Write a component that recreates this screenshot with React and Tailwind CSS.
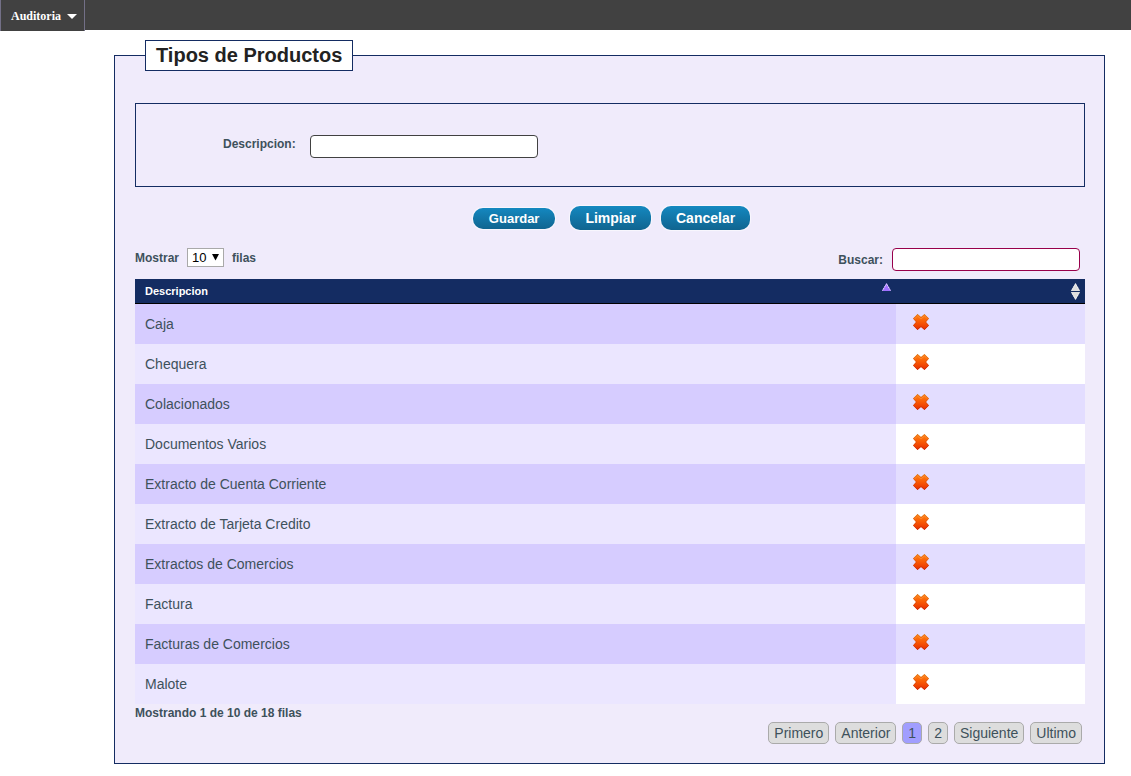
import React, { useState } from "react";

const products = [
  "Caja",
  "Chequera",
  "Colacionados",
  "Documentos Varios",
  "Extracto de Cuenta Corriente",
  "Extracto de Tarjeta Credito",
  "Extractos de Comercios",
  "Factura",
  "Facturas de Comercios",
  "Malote",
];

function DeleteIcon() {
  return (
    <svg width="16" height="16" viewBox="0 0 16 16" className="block" aria-hidden="true">
      <defs>
        <linearGradient id="cross" x1="0" y1="0" x2="0" y2="1">
          <stop offset="0" stopColor="#ff8412" />
          <stop offset="0.5" stopColor="#f95a05" />
          <stop offset="1" stopColor="#e42c00" />
        </linearGradient>
        <linearGradient id="crossEdge" x1="0" y1="0" x2="0" y2="1">
          <stop offset="0" stopColor="#c9762c" />
          <stop offset="0.5" stopColor="#d04a0c" />
          <stop offset="1" stopColor="#b81500" />
        </linearGradient>
      </defs>
      <path
        d="M4.500 0 8 3 11.500 0 16 4.500 13 8 16 11.500 11.500 16 8 13 4.500 16 0 11.500 3 8 0 4.500Z"
        fill="url(#cross)"
      />
      <path
        d="M4.500 .5 8 3.500 11.500 .5 15.500 4.500 12.500 8 15.500 11.500 11.500 15.500 8 12.500 4.500 15.500 .5 11.500 3.500 8 .5 4.500Z"
        fill="none"
        stroke="url(#crossEdge)"
        strokeWidth="1"
        strokeDasharray=".8 .6"
      />
      <path d="M2 4.500 4.500 2 8 5 11.500 2 14 4.500" fill="none" stroke="#ffa95a" strokeWidth=".7" strokeDasharray=".8 .6" />
    </svg>
  );
}

function SortAscIcon() {
  return (
    <svg width="9" height="8" viewBox="0 0 9 8" className="block" aria-hidden="true">
      <path d="M4.500 0 9 8H0Z" fill="#a070ff" />
      <path d="M.5 7.500 4.500 .8 8.500 7.500" fill="none" stroke="#f3edff" strokeWidth="1" strokeDasharray="1.300 .6" />
    </svg>
  );
}

function SortBothIcon() {
  return (
    <svg width="9" height="17" viewBox="0 0 9 17" className="block" aria-hidden="true">
      <path d="M4.500 0 9 8H0Z" fill="#dedede" />
      <path d="M0 9H9L4.500 17Z" fill="#dedede" />
      <path d="M.5 7.500 4.500 .8 8.500 7.500M.5 9.500 4.500 16.200 8.500 9.500" fill="none" stroke="#fff" strokeWidth=".8" strokeDasharray="1.300 .6" />
    </svg>
  );
}

const actionButton =
  "rounded-[10px] bg-linear-to-b from-[#1488c0] to-[#106590] font-bold text-white shadow-[0_0_1px_1px_#ffffff99]";

const pages = ["Primero", "Anterior", "1", "2", "Siguiente", "Ultimo"];

export default function App() {
  const [page, setPage] = useState("1");

  return (
    <div className="bg-white pb-3 font-['Liberation_Sans',Arial,sans-serif] text-[#3e515b]">
      <nav className="flex h-[30px] items-start bg-[#414141]">
        <button
          type="button"
          className="flex h-[31px] items-center gap-[6px] border-x border-[#737087] bg-[#414141] pr-[7px] pl-[10px] font-['Liberation_Serif',serif] text-[12px] font-bold text-white"
        >
          Auditoria
          <svg width="10" height="5" viewBox="0 0 10 5" aria-hidden="true" className="mt-[2px]">
            <path d="M0 0H10L5 5Z" fill="#fff" />
          </svg>
        </button>
      </nav>

      <main className="pt-[10px] pr-[26px] pl-[114px]">
        <fieldset className="min-w-0 border border-[#142c62] bg-[#f0ebfb] pr-[19px] pb-[19px] pl-[20px]">
          <legend className="ml-[10px] border border-[#142c62] bg-white px-[10px] text-[20px] leading-[29px] font-bold text-[#222222]">
            Tipos de Productos
          </legend>

          <div className="mt-8 flex items-start gap-[14px] border border-[#142c62] pt-[31px] pb-[28px] pl-[87px]">
            <label htmlFor="descripcion" className="text-[12px] leading-[18px] font-bold">
              Descripcion:
            </label>
            <input
              id="descripcion"
              type="text"
              className="h-[23px] w-[228px] rounded-[4px] border border-[#414141] bg-white px-1 text-[13px] text-black"
            />
          </div>

          <div className="mt-[19px] flex items-center justify-center pl-[3px]">
            <button type="button" className={`${actionButton} mr-[15px] h-[21px] px-4 text-[13px] leading-[21px]`}>
              Guardar
            </button>
            <button type="button" className={`${actionButton} mr-[10px] h-[24px] px-[15px] text-[14px] leading-[24px]`}>
              Limpiar
            </button>
            <button type="button" className={`${actionButton} h-[24px] px-[15px] text-[14px] leading-[24px]`}>
              Cancelar
            </button>
          </div>

          <div className="mt-[18px] flex items-start justify-between pr-[5px] text-[12px] font-bold">
            <div className="flex items-center gap-2">
              <label htmlFor="filas">Mostrar</label>
              <div className="grid items-center">
                <select
                  id="filas"
                  defaultValue="10"
                  className="col-start-1 row-start-1 h-[19px] w-[37px] appearance-none border border-[#a9a9a9] bg-white pl-1 text-[13px] leading-[17px] font-normal text-black"
                >
                  <option>10</option>
                  <option>25</option>
                  <option>50</option>
                </select>
                <svg
                  width="7"
                  height="7"
                  viewBox="0 0 7 7"
                  aria-hidden="true"
                  className="pointer-events-none col-start-1 row-start-1 mr-[5px] justify-self-end"
                >
                  <path d="M0 0H7L3.500 6.500Z" fill="#000" />
                </svg>
              </div>
              <span>filas</span>
            </div>
            <div className="flex items-center gap-[9px]">
              <label htmlFor="buscar">Buscar:</label>
              <input
                id="buscar"
                type="text"
                className="h-[23px] w-[188px] rounded-[4px] border border-[#98004b] bg-white px-1 text-[13px] font-normal text-black"
              />
            </div>
          </div>

          <table className="mt-2 w-full table-fixed border-collapse">
            <colgroup>
              <col />
              <col className="w-[189px]" />
            </colgroup>
            <thead>
              <tr className="h-[25px] bg-[#142c62] text-left text-[11px] text-white">
                <th className="p-0">
                  <div className="flex h-[25px] items-start justify-between border-b border-black pt-1 pr-[5px] pl-[10px]">
                    <span className="leading-[16px]">Descripcion</span>
                    <SortAscIcon />
                  </div>
                </th>
                <th className="p-0" aria-label="Eliminar">
                  <div className="flex h-[25px] items-start justify-end border-b border-black pt-1 pr-[5px]">
                    <SortBothIcon />
                  </div>
                </th>
              </tr>
            </thead>
            <tbody>
              {products.map((name) => (
                <tr key={name} className="group h-10">
                  <td className="bg-[#ebe6ff] p-0 pl-[10px] text-[14px] group-odd:bg-[#d6ccff]">{name}</td>
                  <td className="bg-white p-0 pb-1 pl-[17px] group-odd:bg-[#e3ddff]">
                    <button type="button" aria-label={`Eliminar ${name}`} className="block">
                      <DeleteIcon />
                    </button>
                  </td>
                </tr>
              ))}
            </tbody>
          </table>

          <p className="text-[12px] leading-[18px] font-bold">Mostrando 1 de 10 de 18 filas</p>
          <div className="flex justify-end gap-[6px] pr-[3px] text-[14px]">
            {pages.map((p) => (
              <button
                key={p}
                type="button"
                onClick={() => setPage(p)}
                className={`h-[22px] rounded-[5px] border border-[#aaaaaa] px-[5px] leading-[20px] ${
                  p === page ? "bg-[#a19eff]" : "bg-[#dddddd]"
                }`}
              >
                {p}
              </button>
            ))}
          </div>
        </fieldset>
      </main>
    </div>
  );
}
